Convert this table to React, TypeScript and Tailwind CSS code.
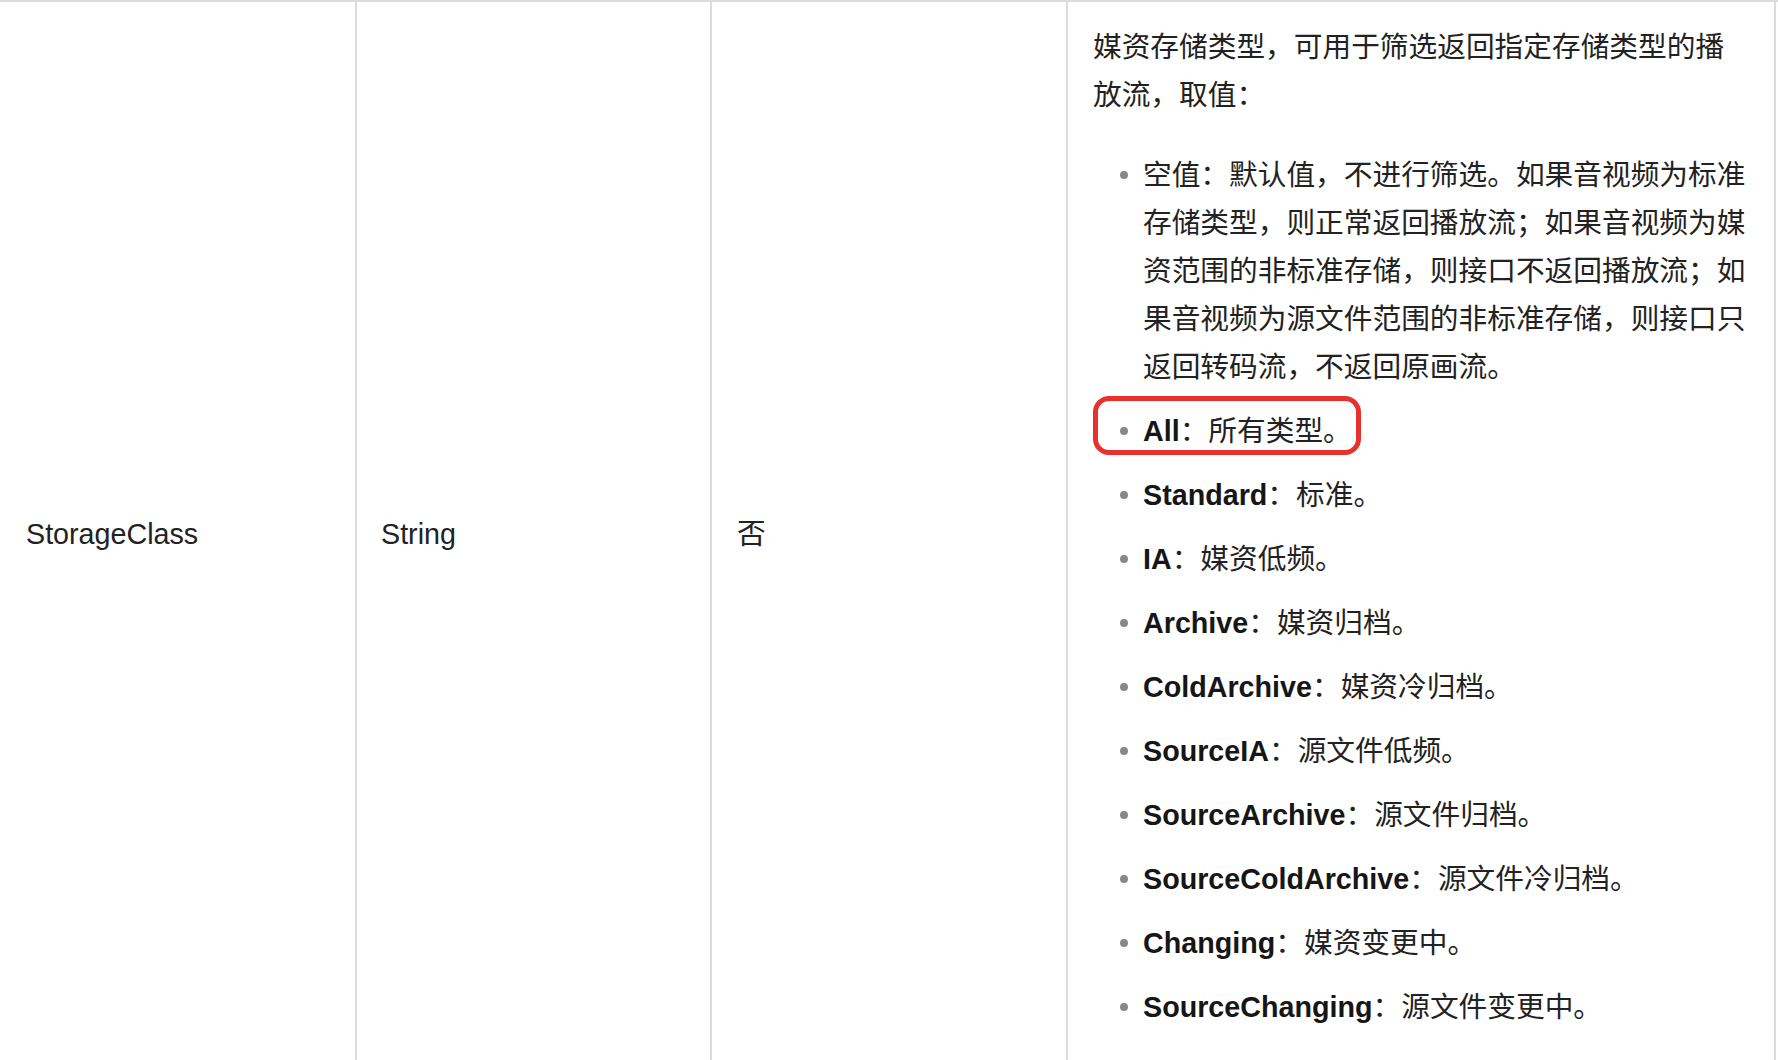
import React from "react";

const items: { label?: string; text: string; highlight?: boolean }[] = [
  {
    text: "空值：默认值，不进行筛选。如果音视频为标准存储类型，则正常返回播放流；如果音视频为媒资范围的非标准存储，则接口不返回播放流；如果音视频为源文件范围的非标准存储，则接口只返回转码流，不返回原画流。",
  },
  { label: "All", text: "：所有类型。", highlight: true },
  { label: "Standard", text: "：标准。" },
  { label: "IA", text: "：媒资低频。" },
  { label: "Archive", text: "：媒资归档。" },
  { label: "ColdArchive", text: "：媒资冷归档。" },
  { label: "SourceIA", text: "：源文件低频。" },
  { label: "SourceArchive", text: "：源文件归档。" },
  { label: "SourceColdArchive", text: "：源文件冷归档。" },
  { label: "Changing", text: "：媒资变更中。" },
  { label: "SourceChanging", text: "：源文件变更中。" },
];

export default function App() {
  return (
    <div
      className="w-[1778px] h-[1060px] overflow-hidden bg-white text-[#222222]"
      style={{ fontFamily: '"Liberation Sans", "Noto Sans CJK SC", sans-serif' }}
    >
      <div className="grid grid-cols-[355px_355px_356px_710px] border-t-2 border-[#dcdcdc] text-[28.7px] leading-[48px]">
        <div className="flex items-center pl-[26px]">StorageClass</div>
        <div className="flex items-center border-l-2 border-[#dcdcdc] pl-[24px]">String</div>
        <div className="flex items-center border-l-2 border-[#dcdcdc] pl-[25px]">否</div>
        <div className="border-l-2 border-r-2 border-[#dcdcdc] pl-[25px] pr-[23px] pt-[21px] pb-[35px]">
          <p>媒资存储类型，可用于筛选返回指定存储类型的播放流，取值：</p>
          <ul className="mt-[32px] flex flex-col gap-[16px]">
            {items.map((it, i) => (
              <li key={i} className="relative flex items-start">
                {it.highlight && (
                  <span className="absolute left-0 top-[-11px] w-[268px] h-[59px] rounded-[16px] border-[5px] border-[#e8302c]" />
                )}
                <span className="flex h-[48px] w-[50px] flex-none items-center pl-[27px]">
                  <span className="block h-[8px] w-[8px] rounded-full bg-[#888888]" />
                </span>
                <span className="min-w-0 flex-1">
                  {it.label && <b className="font-bold text-[#161616]">{it.label}</b>}
                  {it.text}
                </span>
              </li>
            ))}
          </ul>
        </div>
      </div>
    </div>
  );
}
